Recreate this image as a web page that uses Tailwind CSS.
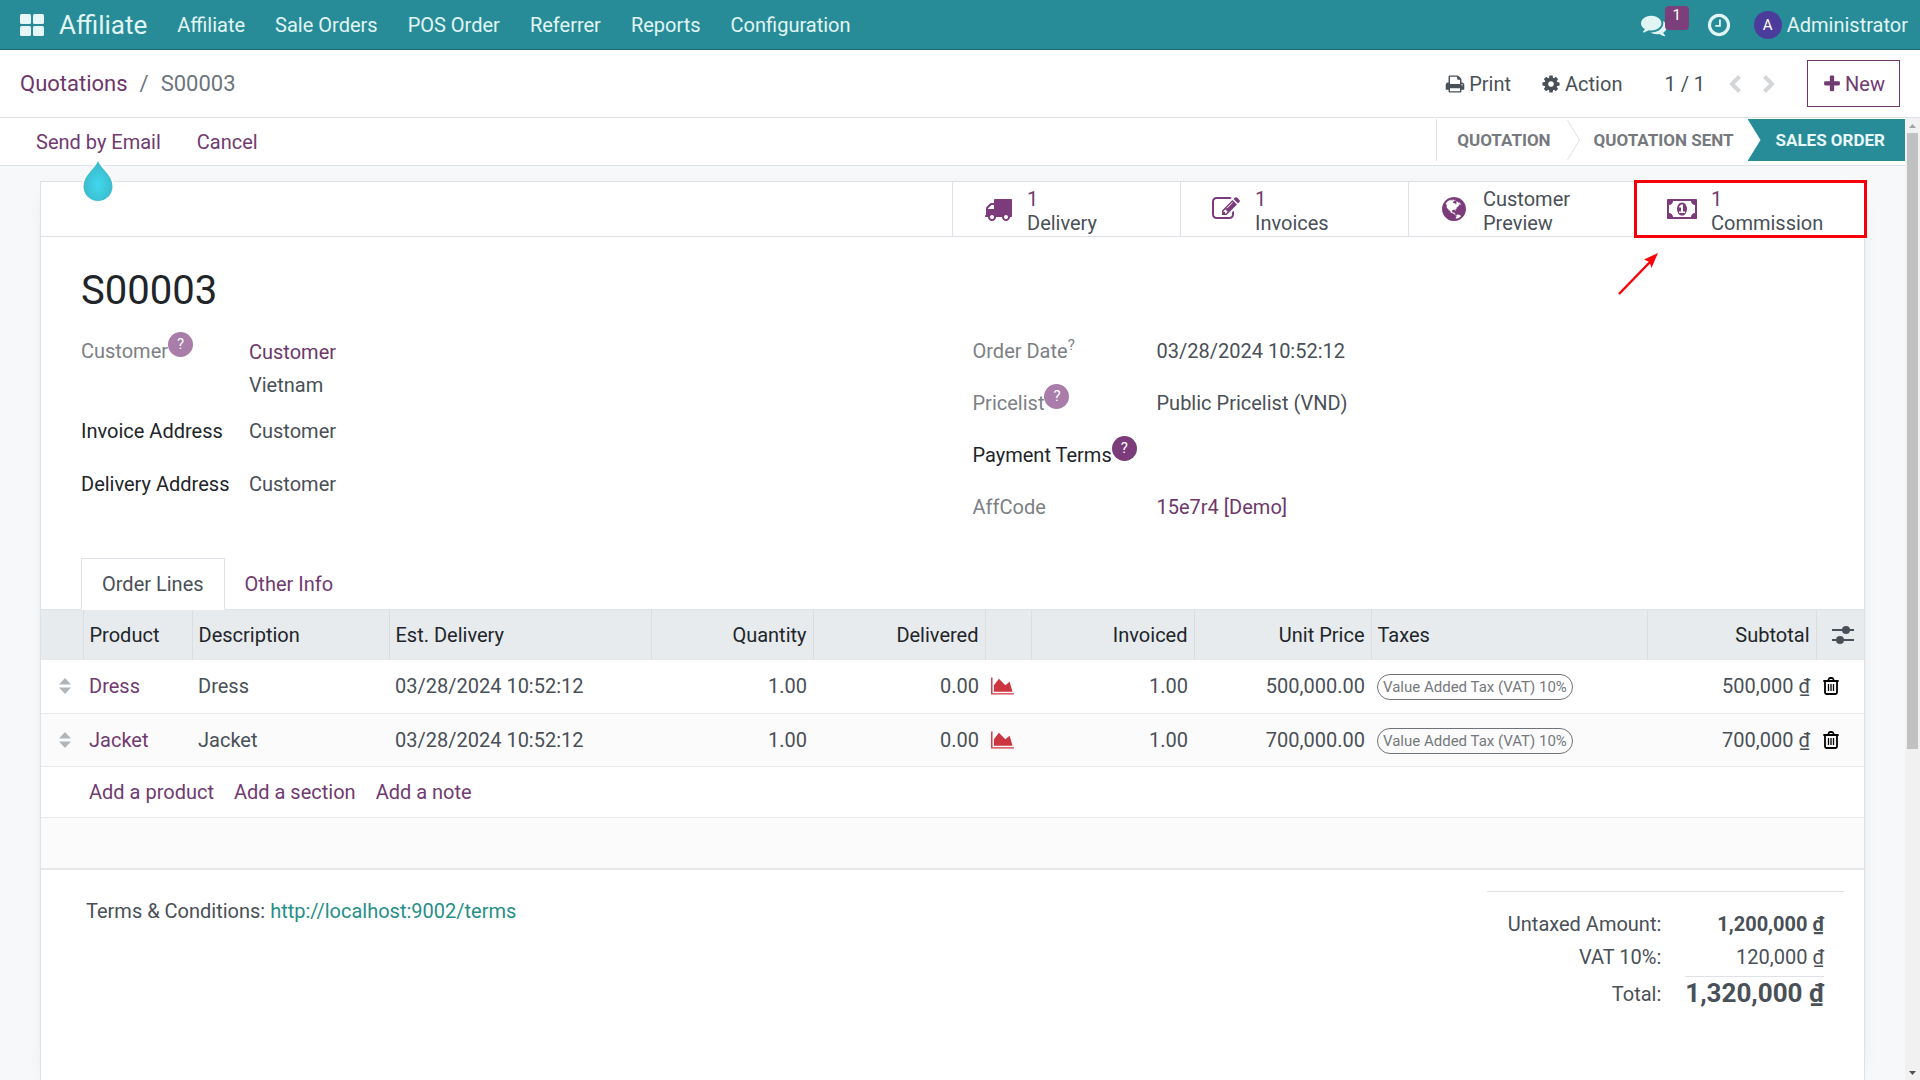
<!DOCTYPE html>
<html lang="en">
<head>
  <meta charset="UTF-8" />
  <meta name="viewport" content="width=device-width, initial-scale=1.0"/>
  <title>S00003 - Affiliate</title>
  <script src="https://cdn.jsdelivr.net/npm/@tailwindcss/browser@4"></script>
</head>
<body class="h-screen flex flex-col overflow-hidden bg-white font-['Roboto',sans-serif] text-[20px] leading-[30px] text-[#495057]">

  <!-- Icons -->
  <svg class="hidden">
    <symbol id="truck" viewBox="0 0 1792 1792"><path d="M640 1408q0-52-38-90t-90-38-90 38-38 90 38 90 90 38 90-38 38-90zm-384-512h384v-256h-158q-13 0-22 9l-195 195q-9 9-9 22v30zm1280 512q0-52-38-90t-90-38-90 38-38 90 38 90 90 38 90-38 38-90zm256-1088v1024q0 15-4 26.5t-13.5 18.5-16.5 11.5-23.5 6-22.5 2-25.5 0-22.5-.5q0 106-75 181t-181 75-181-75-75-181h-384q0 106-75 181t-181 75-181-75-75-181h-64q-3 0-22.5.5t-25.5 0-22.5-2-23.5-6-16.5-11.5-13.5-18.5-4-26.5q0-26 19-45t45-19v-320q0-8-.5-35t0-38 2.5-34.5 6.5-37 14-30.5 22.5-30l198-198q19-19 50.5-32t58.5-13h160v-192q0-26 19-45t45-19h1024q26 0 45 19t19 45z"/></symbol>
    <symbol id="edit" viewBox="0 0 1792 1792"><path d="M888 1184l116-116-152-152-116 116v56h96v96h56zm440-720q-16-16-33 1l-350 350q-17 17-1 33t33-1l350-350q17-17 1-33zm80 594v190q0 119-84.5 203.5t-203.5 84.5h-832q-119 0-203.5-84.5t-84.5-203.5v-832q0-119 84.5-203.5t203.5-84.5h832q63 0 117 25 15 7 18 23 3 17-9 29l-49 49q-14 14-32 8-23-6-45-6h-832q-66 0-113 47t-47 113v832q0 66 47 113t113 47h832q66 0 113-47t47-113v-126q0-13 9-22l64-64q15-15 35-7t20 29zm-96-738l288 288-672 672h-288v-288zm444 132l-92 92-288-288 92-92q28-28 68-28t68 28l152 152q28 28 28 68t-28 68z"/></symbol>
    <symbol id="globe" viewBox="0 0 1792 1792"><path d="M896 128q209 0 385.5 103t279.5 279.5 103 385.5-103 385.5-279.5 279.5-385.5 103-385.5-103-279.5-279.5-103-385.5 103-385.5 279.5-279.5 385.5-103zm274 521q-2 1-9.5 9.5t-13.5 9.5q2 0 4.5-5t5-11 3.5-7q6-7 22-15 14-6 52-12 34-8 51 11-2-2 9.5-13t14.5-12q3-2 15-4.5t15-7.5l2-22q-12 1-17.5-7t-6.5-21q0 2-6 8 0-7-4.5-8t-11.5 1-9 1q-10-3-15-7.5t-8-16.5-4-15q-2-5-9.5-11t-9.5-10q-1-2-2.5-5.5t-3-6.5-4-5.5-5.5-2.5-7 5-7.5 10-4.5 5q-3-2-6-1.5t-4.5 1-4.5 3-5 3.5q-3 2-8.5 3t-8.5 2q15-5-1-11-10-4-16-3 9-4 7.5-12t-8.5-14h5q-1-4-8.5-8.5t-17.5-8.5-13-6q-8-5-34-9.5t-33-.5q-5 6-4.5 10.5t4 14 3.5 12.5q1 6-5.5 13t-6.5 12q0 7 14 15.5t10 21.5q-3 8-16 16t-16 12q-5 8-1.5 18.5t10.5 16.5q2 2 1.5 4t-3.5 4.5-5.5 4-6.5 3.5l-3 2q-11 5-20.5-6t-13.5-26q-7-25-16-30-23-8-29 1-5-13-41-26-25-9-58-4 6-1 0-15-7-15-19-12 3-6 4-17.5t1-13.5q3-13 12-23 1-1 7-8.5t9.5-13.5.5-6q35 4 50-11 5-5 11.5-17t10.5-17q9-6 14-5.5t14.5 5.5 14.5 5q14 1 15.5-11t-7.5-20q12 1 3-17-4-7-8-9-12-4-27 5-8 4 2 8-1-1-9.5 10.5t-16.5 17.5-16-5q-1-1-5.5-13.5t-9.5-13.5q-8 0-16 15 3-8-11-15t-24-8q19-12-8-27-7-4-20.5-5t-19.5 4q-5 7-5.5 11.5t5 8 10.5 5.5 11.5 4 8.5 3q14 10 8 14-2 1-8.5 3.5t-11.5 4.5-6 4q-3 4 0 14t-2 14q-5-5-9-17.5t-7-16.5q7 9-25 6l-10-1q-4 0-16 2t-20.5 1-13.5-8q-4-8 0-20 1-4 4-2-4-3-11-9.5t-10-8.5q-46 15-94 41 6 1 12-1 5-2 13-6.5t10-5.5q34-14 42-7l5-5q14 16 20 25-7-4-30-1-20 6-22 12 7 12 5 18-4-3-11.5-10t-14.5-11-15-5q-16 0-22 1-146 80-235 222 7 7 12 8 4 1 5 9t2.5 11 11.5-3q9 8 3 19 1-1 44 27 19 17 21 21 3 11-10 18-1-2-9-9t-9-4q-3 5 .5 18.5t10.5 12.5q-7 0-9.5 16t-2.5 35.5-1 23.5l2 1q-3 12 5.5 34.5t21.5 19.5q-13 3 20 43 6 8 8 9 3 2 12 7.5t15 10 10 10.5q4 5 10 22.5t14 23.5q-2 6 9.5 20t10.5 23q-1 0-2.5 1t-2.5 1q3 7 15.5 14t15.5 13q1 3 2 10t3 11 8 2q2-20-24-62-15-25-17-29-3-5-5.5-15.5t-4.5-14.5q2 0 6 1.5t8.5 3.5 7.5 4 2 3q-3 7 2 17.5t12 18.5 17 19 12 13q6 6 14 19.5t0 13.5q9 0 20 10.5t17 19.5q5 8 8 26t5 24q2 7 8.5 13.5t12.5 9.5l16 8 13 7q5 2 18.5 10.5t21.5 11.5q10 4 16 4t14.5-2.5 13.5-3.5q15-2 29 15t21 21q36 19 55 11-2 1 .5 7.5t8 15.5 9 14.5 5.5 8.5q5 6 18 15t18 15q6-4 7-9-3 8 7 20t18 10q14-3 14-32-31 15-49-18 0-1-2.5-5.5t-4-8.5-2.5-8.5 0-7.5 5-3q9 0 10-3.5t-2-12.5-4-13q-1-8-11-20t-12-15q-5 9-16 8t-16-9q0 1-1.5 5.5t-1.5 6.5q-13 0-15-1 1-3 2.5-17.5t3.5-22.5q1-4 5.5-12t7.5-14.5 4-12.5-4.5-9.5-17.5-2.5q-19 1-26 20-1 3-3 10.5t-5 11.5-9 7q-7 3-24 2t-24-5q-13-8-22.5-29t-9.5-37q0-10 2.5-26.5t3-25-5.5-24.5q3-2 9-9.5t10-10.5q2-1 4.5-1.5t4.5 0 4-1.5 3-6q-1-1-4-3-3-3-4-3 7 3 28.5-1.5t27.5 1.5q15 11 22-2 0-1-2.5-9.5t-.5-13.5q5 27 29 9 3 3 15.5 5t17.5 5q3 2 7 5.5t5.5 4.5 5-.5 8.5-6.5q10 14 12 24 11 40 19 44 7 3 11 2t4.5-9.5 0-14-1.5-12.5l-1-8v-18l-1-8q-15-3-18.5-12t1.5-18.5 15-18.5q1-1 8-3.5t15.5-6.5 12.5-8q21-19 15-35 7 0 11-9-1 0-5-3t-7.5-5-4.5-2q9-5 2-16 5-3 7.5-11t7.5-10q9 12 21 2 7-8 1-16 5-7 20.5-10.5t18.5-9.5q7 2 8-2t1-12 3-12q4-5 15-9t13-5l17-11q3-4 0-4 18 2 31-11 10-11-6-20 3-6-3-9.5t-15-5.5q3-1 11.5-.5t10.5-1.5q15-10-7-16-17-5-43 12zm-163 877q206-36 351-189-3-3-12.5-4.5t-12.5-3.5q-18-7-24-8 1-7-2.5-13t-8-9-12.5-8-11-7q-2-2-7-6t-7-5.5-7.5-4.5-8.5-2-10 1l-3 1q-3 1-5.5 2.5t-5.5 3-4 3 0 2.5q-21-17-36-22-5-1-11-5.5t-10.5-7-10-1.5-11.5 7q-5 5-6 15t-2 13q-7-5 0-17.5t2-18.5q-3-6-10.5-4.5t-12 4.5-11.5 8.5-9 6.5-8.5 5.5-8.5 7.5q-3 4-6 12t-5 11q-2-4-11.5-6.5t-9.5-5.5q2 10 4 35t5 38q7 31-12 48-27 25-29 40-4 22 12 26 0 7-8 20.5t-7 21.5q0 6 2 16z"/></symbol>
    <symbol id="money" viewBox="0 0 1920 1792"><path d="M768 1152h384v-96h-128v-448h-114l-148 137 77 80q42-37 55-57h2v288h-128v96zm512-256q0 70-21 142t-59.5 134-101.5 101-138 39-138-39-101.5-101-59.5-134-21-142 21-142 59.5-134 101.5-101 138-39 138 39 101.5 101 59.5 134 21 142zm512 256v-512q-106 0-181-75t-75-181h-1152q0 106-75 181t-181 75v512q106 0 181 75t75 181h1152q0-106 75-181t181-75zm128-832v1152q0 26-19 45t-45 19h-1792q-26 0-45-19t-19-45v-1152q0-26 19-45t45-19h1792q26 0 45 19t19 45z"/></symbol>
    <symbol id="print" viewBox="0 0 1792 1792"><path d="M448 1536h896v-256h-896v256zm0-640h896v-384h-160q-40 0-68-28t-28-68v-160h-640v640zm1152 64q0-26-19-45t-45-19-45 19-19 45 19 45 45 19 45-19 19-45zm128 0v416q0 13-9.5 22.5t-22.5 9.5h-224v160q0 40-28 68t-68 28h-960q-40 0-68-28t-28-68v-160h-224q-13 0-22.5-9.5t-9.5-22.5v-416q0-79 56.5-135.5t135.5-56.5h64v-544q0-40 28-68t68-28h672q40 0 88 20t76 48l152 152q28 28 48 76t20 88v256h64q79 0 135.5 56.5t56.5 135.5z"/></symbol>
    <symbol id="cog" viewBox="0 0 1792 1792"><path d="M1152 896q0-106-75-181t-181-75-181 75-75 181 75 181 181 75 181-75 75-181zm512-109v222q0 12-8 23t-20 13l-185 28q-19 54-39 91 35 50 107 138 10 12 10 25t-9 23q-27 37-99 108t-94 71q-12 0-26-9l-138-108q-44 23-91 38-16 136-29 186-7 28-36 28h-222q-14 0-24.5-8.5t-11.5-21.5l-28-184q-49-16-90-37l-141 107q-10 9-25 9-14 0-25-11-126-114-165-168-7-10-7-23 0-12 8-23 15-21 51-66.5t54-70.5q-27-50-41-99l-183-27q-13-2-21-12.5t-8-23.5v-222q0-12 8-23t19-13l186-28q14-46 39-92-40-57-107-138-10-12-10-24 0-10 9-23 26-36 98.5-107.5t94.5-71.5q13 0 26 10l138 107q44-23 91-38 16-136 29-186 7-28 36-28h222q14 0 24.5 8.5t11.5 21.5l28 184q49 16 90 37l142-107q9-9 24-9 13 0 25 10 129 119 165 170 7 8 7 22 0 12-8 23-15 21-51 66.5t-54 70.5q26 50 41 98l183 28q13 2 21 12.5t8 23.5z"/></symbol>
    <symbol id="plus" viewBox="0 0 1792 1792"><path d="M1600 736v192q0 40-28 68t-68 28h-416v416q0 40-28 68t-68 28h-192q-40 0-68-28t-28-68v-416h-416q-40 0-68-28t-28-68v-192q0-40 28-68t68-28h416v-416q0-40 28-68t68-28h192q40 0 68 28t28 68v416h416q40 0 68 28t28 68z"/></symbol>
    <symbol id="clock" viewBox="0 0 1792 1792"><path d="M1024 544v448q0 14-9 23t-23 9h-320q-14 0-23-9t-9-23v-64q0-14 9-23t23-9h224v-352q0-14 9-23t23-9h64q14 0 23 9t9 23zm416 352q0-148-73-273t-198-198-273-73-273 73-198 198-73 273 73 273 198 198 273 73 273-73 198-198 73-273zm224 0q0 209-103 385.5t-279.5 279.5-385.5 103-385.5-103-279.5-279.5-103-385.5 103-385.5 279.5-279.5 385.5-103 385.5 103 279.5 279.5 103 385.5z"/></symbol>
    <symbol id="comments" viewBox="0 0 1792 1792"><path d="M1408 768q0 139-94 257t-256.5 186.5-353.5 68.5q-86 0-176-16-124 88-278 128-36 9-86 16h-3q-11 0-20.5-8t-11.5-21q-1-3-1-6.5t.5-6.5 2-6l2.5-5 3.5-5.5 4-5 4.5-5 4-4.5q5-6 23-25t26-29.5 22.5-29 25-38.5 20.5-44q-124-72-195-177t-71-224q0-139 94-257t256.5-186.5 353.5-68.5 353.5 68.5 256.5 186.5 94 257zm384 256q0 120-71 224.5t-195 176.5q10 24 20.5 44t25 38.5 22.5 29 26 29.5 23 25q1 1 4 4.5t4.5 5 4 5 3.5 5.5l2.5 5 2 6 .5 6.5-1 6.5q-3 14-13 22t-22 7q-50-7-86-16-154-40-278-128-90 16-176 16-271 0-472-132 58 4 88 4 161 0 309-45t264-129q125-92 192-212t67-254q0-77-23-152 129 71 204 178t75 230z"/></symbol>
    <symbol id="chart" viewBox="0 0 2048 1792"><path d="M2048 1536v128h-2048v-1536h128v1408h1920zm-384-1024l256 896h-1664v-576l448-576 576 576z"/></symbol>
    <symbol id="trash" viewBox="0 0 16 18"><path d="M2 4v11.500Q2 17 3.500 17h9q1.500 0 1.500-1.500V4M1 4h14M5 4l.8-2Q6.200 1 7 1h2q.8 0 1.200 1l.8 2" fill="none" stroke="currentColor" stroke-width="1.800" stroke-linecap="round"/><path d="M5.500 7v7M8 7v7M10.500 7v7" fill="none" stroke="currentColor" stroke-width="1.300"/></symbol>
    <symbol id="handle" viewBox="0 0 12 16"><path d="M6 0l6 6.500H0zM0 9.500h12L6 16z"/></symbol>
  </svg>

  <header class="h-[50px] shrink-0 flex items-center bg-[#278c97] border-b border-[#1c666e] text-[#e2f5f5]">
    <a href="#" aria-label="Apps" class="ml-5 mr-[15px]">
      <svg class="w-6 h-[22px]" viewBox="0 0 24 22" fill="#e6f6f6"><rect width="11" height="10" rx="1.500"/><rect x="13" width="11" height="10" rx="1.500"/><rect y="12" width="11" height="10" rx="1.500"/><rect x="13" y="12" width="11" height="10" rx="1.500"/></svg>
    </a>
    <a href="#" class="text-[26px] mr-[15px]">Affiliate</a>
    <nav class="flex">
      <a href="#" class="px-[15px]">Affiliate</a>
      <a href="#" class="px-[15px]">Sale Orders</a>
      <a href="#" class="px-[15px]">POS Order</a>
      <a href="#" class="px-[15px]">Referrer</a>
      <a href="#" class="px-[15px]">Reports</a>
      <a href="#" class="px-[15px]">Configuration</a>
    </nav>
    <div class="ml-auto mr-3 flex items-center">
      <button class="relative mr-[39px]" aria-label="Messages">
        <svg class="w-[26px] h-[26px] fill-current"><use href="#comments"/></svg>
        <span class="absolute left-6 -top-1.5 w-6 h-6 rounded-sm bg-[#7c3f7c] text-white text-[15px] leading-[18px]">1</span>
      </button>
      <button class="mr-[22px]" aria-label="Activities"><svg class="w-[26px] h-[26px] fill-current"><use href="#clock"/></svg></button>
      <button class="flex items-center gap-[5px]">
        <span class="w-7 h-7 rounded-full bg-[#4b3c9b] text-white text-[15px] leading-7">A</span>
        Administrator
      </button>
    </div>
  </header>

  <div class="h-[68px] shrink-0 flex items-center justify-between px-5 border-b border-[#dee2e6]">
    <div class="text-[22px] flex gap-3 text-[#6c757d]">
      <a href="#" class="text-[#6d3869]">Quotations</a><span>/</span><span>S00003</span>
    </div>
    <div class="flex items-center">
      <button class="flex items-center gap-1 mr-[30px]"><svg class="w-5 h-5 fill-current"><use href="#print"/></svg>Print</button>
      <button class="flex items-center gap-1 mr-[42px]"><svg class="w-5 h-5 fill-current"><use href="#cog"/></svg>Action</button>
      <span class="mr-6">1 / 1</span>
      <button class="mr-[22px]" aria-label="Previous"><svg class="w-3 h-[18px]" viewBox="0 0 12 18" fill="none" stroke="#d3d6d9" stroke-width="4"><path d="M10.500 1.500L3 9l7.500 7.500"/></svg></button>
      <button class="mr-8" aria-label="Next"><svg class="w-3 h-[18px]" viewBox="0 0 12 18" fill="none" stroke="#d3d6d9" stroke-width="4"><path d="M1.500 1.500L9 9l-7.500 7.500"/></svg></button>
      <button class="h-[47px] px-[14px] flex items-center gap-[3px] border border-[#6d3869] text-[#713a70]"><svg class="w-5 h-5 fill-current"><use href="#plus"/></svg>New</button>
    </div>
  </div>

  <div class="flex-1 min-h-0 flex">
    <main class="flex-1 min-w-0 flex flex-col bg-[#f7f8fa]">
      <div class="h-12 shrink-0 flex justify-between bg-white border-b border-[#dee2e6]">
        <div class="flex items-center gap-9 pl-9 text-[#713a70]">
          <button class="relative">Send by Email
            <svg class="absolute left-1/2 -translate-x-1/2 top-[31px] w-9 h-12" viewBox="0 0 36 48">
              <defs><radialGradient id="drop" cx="50%" cy="60%" r="50%"><stop offset="0" stop-color="#3fd8ef"/><stop offset="1" stop-color="#3cbccc"/></radialGradient></defs>
              <path d="M18 3C15 11 3.500 17 3.500 28.500a14.500 14.500 0 0 0 29 0C32.500 17 21 11 18 3z" fill="url(#drop)" stroke="#fff" stroke-width="4" stroke-opacity=".8" paint-order="stroke"/>
            </svg>
          </button>
          <button>Cancel</button>
        </div>
        <div class="mt-px h-[42px] flex items-center border-l border-[#dee2e6] text-[17px] font-bold text-[#75797d]">
          <button class="pl-5 pr-4">QUOTATION</button>
          <svg class="w-[13px] h-10" viewBox="0 0 13 40" fill="none" stroke="#dee2e6"><path d="M.5 0l12 20L.5 40"/></svg>
          <button class="px-[14px]">QUOTATION SENT</button>
          <button class="h-full pl-7 pr-5 bg-[#278c97] text-[#e8f8f8] [clip-path:polygon(0_0,100%_0,100%_100%,0_100%,13px_50%)]">SALES ORDER</button>
        </div>
      </div>

      <section class="mt-[15px] mx-10 flex-1 min-h-0 bg-white border-x border-t border-[#dee2e6] shadow-[0_5px_20px_-15px_rgba(0,0,0,0.4)]">
        <div class="h-[55px] flex justify-end border-b border-[#dee2e6] leading-6">
          <button class="w-[228px] flex items-center border-l border-[#dee2e6] pl-4 text-left">
            <span class="w-[58px] flex justify-center text-[#7c3b7b]"><svg class="w-[28px] h-[28px] fill-current"><use href="#truck"/></svg></span>
            <span class="pt-1"><span class="block text-[#713a70]">1</span>Delivery</span>
          </button>
          <button class="w-[228px] flex items-center border-l border-[#dee2e6] pl-4 text-left">
            <span class="w-[58px] flex justify-center text-[#7c3b7b]"><svg class="w-[28px] h-[28px] fill-current"><use href="#edit"/></svg></span>
            <span class="pt-1"><span class="block text-[#713a70]">1</span>Invoices</span>
          </button>
          <button class="w-[228px] flex items-center border-l border-[#dee2e6] pl-4 text-left">
            <span class="w-[58px] flex justify-center text-[#7c3b7b]"><svg class="w-[28px] h-[28px] fill-current"><use href="#globe"/></svg></span>
            <span class="pt-1"><span class="block">Customer</span>Preview</span>
          </button>
          <button class="relative w-[228px] flex items-center border-l border-[#dee2e6] pl-4 text-left">
            <span class="w-[58px] flex justify-center text-[#7c3b7b]"><svg class="w-[30px] h-[28px] fill-current"><use href="#money"/></svg></span>
            <span class="pt-1"><span class="block text-[#713a70]">1</span>Commission</span>
            <span class="absolute -inset-x-[3px] -inset-y-[2px] border-[3px] border-[#f5000a]"></span>
            <svg class="absolute -left-5 top-[70px] w-[42px] h-[44px]" viewBox="0 0 42 44"><path d="M2 42L33 10" stroke="#fb0007" stroke-width="2.500"/><path d="M41 1L27 7.500l5.500 2.500L34.500 16z" fill="#fb0007"/></svg>
          </button>
        </div>

        <h1 class="pl-10 mt-[30px] text-[40px] leading-[48px] text-[#212529]">S00003</h1>

        <div class="mt-[21px] px-10 grid grid-cols-2 gap-x-10">
          <dl class="grid grid-cols-[168px_1fr] content-start">
            <dt class="h-[80px] flex items-start text-[#7c8085]">Customer<sup class="-mt-1 w-[25px] h-[25px] rounded-full bg-[#a97ca9] text-white text-[15px] leading-[25px] text-center top-0">?</sup></dt>
            <dd class="h-[80px] leading-[33px]"><a href="#" class="text-[#6d3869]">Customer</a><br>Vietnam</dd>
            <dt class="h-[53px] text-[#212529]">Invoice Address</dt>
            <dd>Customer</dd>
            <dt class="h-[53px] text-[#212529]">Delivery Address</dt>
            <dd>Customer</dd>
          </dl>
          <dl class="grid grid-cols-[184px_1fr] auto-rows-[52px] content-start text-[#7c8085]">
            <dt class="flex items-start">Order Date<sup class="text-[15px] leading-[18px] top-0">?</sup></dt>
            <dd class="text-[#495057]">03/28/2024 10:52:12</dd>
            <dt class="flex items-start">Pricelist<sup class="-mt-1 w-[25px] h-[25px] rounded-full bg-[#a97ca9] text-white text-[15px] leading-[25px] text-center top-0">?</sup></dt>
            <dd class="text-[#495057]">Public Pricelist (VND)</dd>
            <dt class="flex items-start text-[#212529]">Payment Terms<sup class="-mt-1 w-[25px] h-[25px] rounded-full bg-[#7c3b7b] text-white text-[15px] leading-[25px] text-center top-0">?</sup></dt>
            <dd></dd>
            <dt>AffCode</dt>
            <dd><a href="#" class="text-[#6d3869]">15e7r4 [Demo]</a></dd>
          </dl>
        </div>

        <div class="mt-3.5 pl-10 flex border-b border-[#dee2e6]" role="tablist">
          <button role="tab" class="-mb-px h-[52px] px-5 bg-white border border-b-white border-[#dee2e6]">Order Lines</button>
          <button role="tab" class="px-5 text-[#713a70]">Other Info</button>
        </div>

        <table class="w-full table-fixed border-collapse">
          <colgroup>
            <col class="w-[42px]"><col class="w-[109px]"><col class="w-[197px]"><col class="w-[262px]"><col class="w-[162px]"><col class="w-[172px]"><col class="w-[46px]"><col class="w-[163px]"><col class="w-[177px]"><col><col class="w-[169px]"><col class="w-[48px]">
          </colgroup>
          <thead class="bg-[#e7ebee] text-[#212529] text-left">
            <tr class="h-[50px] [&>th]:font-normal [&>th]:px-1.5 [&>th+th]:border-l [&>th]:border-[#dbdfe4]">
              <th></th><th>Product</th><th>Description</th><th>Est. Delivery</th><th class="text-right">Quantity</th><th class="text-right">Delivered</th><th></th><th class="text-right">Invoiced</th><th class="text-right">Unit Price</th><th>Taxes</th><th class="text-right">Subtotal</th>
              <th><button class="block ml-auto mr-1" aria-label="Optional columns"><svg class="w-[22px] h-[22px] text-[#495057]" viewBox="0 0 22 22"><path d="M0 6h22M0 16h22" stroke="currentColor" stroke-width="2"/><circle cx="14" cy="6" r="4" fill="currentColor"/><circle cx="8" cy="16" r="4" fill="currentColor"/></svg></button></th>
            </tr>
          </thead>
          <tbody>
            <tr class="h-[53px] border-b border-[#e6e8ea] [&>td]:px-1.5">
              <td><svg class="ml-3 w-3 h-4 fill-[#b0b5ba]"><use href="#handle"/></svg></td>
              <td><a href="#" class="text-[#713a70]">Dress</a></td><td>Dress</td><td>03/28/2024 10:52:12</td>
              <td class="text-right">1.00</td><td class="text-right">0.00</td>
              <td><svg class="w-[23px] h-5 fill-[#cc3640]"><use href="#chart"/></svg></td>
              <td class="text-right">1.00</td><td class="text-right">500,000.00</td>
              <td><span class="block w-fit mt-0.5 h-[26px] px-[5px] border border-[#6f7479] rounded-full text-[15px] leading-6 text-[#75797d]">Value Added Tax (VAT) 10%</span></td>
              <td class="text-right">500,000 ₫</td>
              <td><button class="block ml-px" aria-label="Delete row"><svg class="w-4 h-[18px] text-black"><use href="#trash"/></svg></button></td>
            </tr>
            <tr class="h-[53px] bg-[#fbfbfb] border-b border-[#e6e8ea] [&>td]:px-1.5">
              <td><svg class="ml-3 w-3 h-4 fill-[#b0b5ba]"><use href="#handle"/></svg></td>
              <td><a href="#" class="text-[#713a70]">Jacket</a></td><td>Jacket</td><td>03/28/2024 10:52:12</td>
              <td class="text-right">1.00</td><td class="text-right">0.00</td>
              <td><svg class="w-[23px] h-5 fill-[#cc3640]"><use href="#chart"/></svg></td>
              <td class="text-right">1.00</td><td class="text-right">700,000.00</td>
              <td><span class="block w-fit mt-0.5 h-[26px] px-[5px] border border-[#6f7479] rounded-full text-[15px] leading-6 text-[#75797d]">Value Added Tax (VAT) 10%</span></td>
              <td class="text-right">700,000 ₫</td>
              <td><button class="block ml-px" aria-label="Delete row"><svg class="w-4 h-[18px] text-black"><use href="#trash"/></svg></button></td>
            </tr>
            <tr class="h-[51px] border-b border-[#e6e8ea]">
              <td></td>
              <td colspan="11" class="px-1.5 text-[#713a70]"><a href="#" class="mr-5">Add a product</a><a href="#" class="mr-5">Add a section</a><a href="#">Add a note</a></td>
            </tr>
            <tr class="h-[52px] bg-[#fbfbfb] border-b-2 border-[#e6e8ea]"><td colspan="12"></td></tr>
          </tbody>
        </table>

        <div class="flex justify-between pl-[45px] pr-5 pt-[21px]">
          <p class="mt-[5px]">Terms &amp; Conditions: <a href="#" class="text-[#258f88]">http://localhost:9002/terms</a></p>
          <dl class="w-[357px] pt-4 pr-5 border-t border-[#dee2e6] grid grid-cols-[1fr_auto] gap-x-6 text-right leading-[33px]">
            <dt>Untaxed Amount:</dt><dd class="font-bold">1,200,000 ₫</dd>
            <dt>VAT 10%:</dt><dd>120,000 ₫</dd>
            <dt class="pt-1">Total:</dt><dd class="mt-0.5 border-t border-[#dee2e6] text-[26px] font-bold">1,320,000 ₫</dd>
          </dl>
        </div>
      </section>
    </main>

    <div class="w-[15px] shrink-0 flex flex-col items-center bg-[#f1f1f1]">
      <svg class="w-[7px] h-[15px] shrink-0 fill-[#a3a3a3]" viewBox="0 0 7 15"><path d="M0 10l3.500-4L7 10z"/></svg>
      <div class="w-[11px] h-[64%] bg-[#c1c1c1]"></div>
      <svg class="mt-auto w-[7px] h-[15px] fill-[#505050]" viewBox="0 0 7 15"><path d="M0 6l3.500 4L7 6z"/></svg>
    </div>
  </div>
</body>
</html>
